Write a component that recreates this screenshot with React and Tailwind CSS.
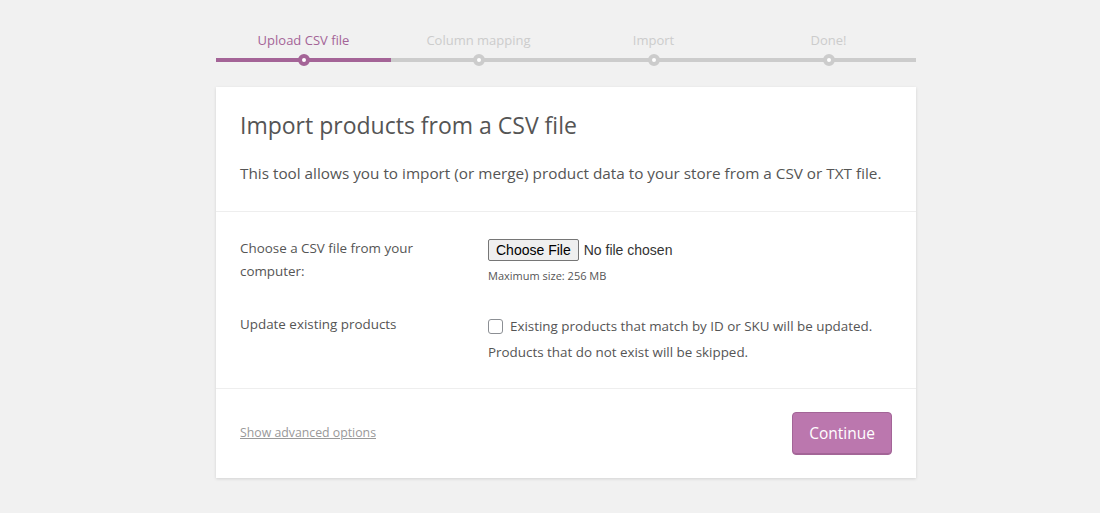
export default function App() {
  const steps = ["Upload CSV file", "Column mapping", "Import", "Done!"];
  const font = { fontFamily: '"Open Sans", "Noto Sans", sans-serif' };

  return (
    <div className="min-h-screen bg-[#f1f1f1] pl-[32px]" style={font}>
      <div className="w-[700px] mx-auto">
        {/* Steps */}
        <ol className="flex pt-[30px]">
          {steps.map((s, i) => (
            <li
              key={s}
              className={
                "relative flex-1 text-center pb-[8px] border-b-4 " +
                (i === 0 ? "border-[#a46497] text-[#a46497]" : "border-[#cccccc] text-[#cccccc]")
              }
            >
              <span className="block text-[13px] leading-[20px]">{s}</span>
              <span
                className={
                  "absolute left-1/2 -bottom-[8px] -translate-x-1/2 w-[12px] h-[12px] rounded-full bg-white border-[4px] " +
                  (i === 0 ? "border-[#a46497]" : "border-[#cccccc]")
                }
              />
            </li>
          ))}
        </ol>

        {/* Card */}
        <div className="mt-[25px] bg-white shadow-[0_1px_3px_rgba(0,0,0,0.13)]">
          <header className="px-6 pt-[22px] pb-[26px] border-b border-[#eeeeee]">
            <h2 className="text-[23px] leading-[32px] text-[#555555] mb-[20px]">
              Import products from a CSV file
            </h2>
            <p className="text-[15.3px] leading-[24px] text-[#555555]">
              This tool allows you to import (or merge) product data to your store from a CSV or TXT file.
            </p>
          </header>

          <section className="px-6 pt-[25px] pb-[23px] border-b border-[#eeeeee] text-[13.4px] text-[#555555]">
            <div className="flex">
              <div className="w-[248px] leading-[23px] pr-[60px]">Choose a CSV file from your computer:</div>
              <div className="flex-1 pt-[2px]">
                <div className="flex items-center gap-[5px]" style={{ fontFamily: '"Liberation Sans", Arial, sans-serif' }}>
                  <span className="px-[7px] h-[22px] leading-[20px] border border-[#767676] rounded-[2px] bg-[#efefef] text-[14px] text-black">
                    Choose File
                  </span>
                  <span className="text-[14px] text-[#333333]">No file chosen</span>
                </div>
                <div className="text-[11px] leading-[16px] mt-[7px] text-[#555555]">Maximum size: 256 MB</div>
              </div>
            </div>

            <div className="flex mt-[29px]">
              <div className="w-[248px] leading-[23px]">Update existing products</div>
              <div className="flex-1">
                <div className="flex items-center gap-[7px] leading-[26px]">
                  <span className="inline-block w-[15px] h-[15px] border border-[#8c8f94] rounded-[3px] bg-white" />
                  <span>Existing products that match by ID or SKU will be updated.</span>
                </div>
                <div className="leading-[26px]">Products that do not exist will be skipped.</div>
              </div>
            </div>
          </section>

          <footer className="h-[89px] px-6 flex items-center justify-between">
            <a className="text-[12.3px] text-[#999999] underline">Show advanced options</a>
            <button className="w-[100px] h-[43px] rounded-[4px] bg-[#bb77ae] border border-[#a36597] shadow-[inset_0_-1px_0_#a36597] text-white text-[15.5px]">
              Continue
            </button>
          </footer>
        </div>
      </div>
    </div>
  );
}
